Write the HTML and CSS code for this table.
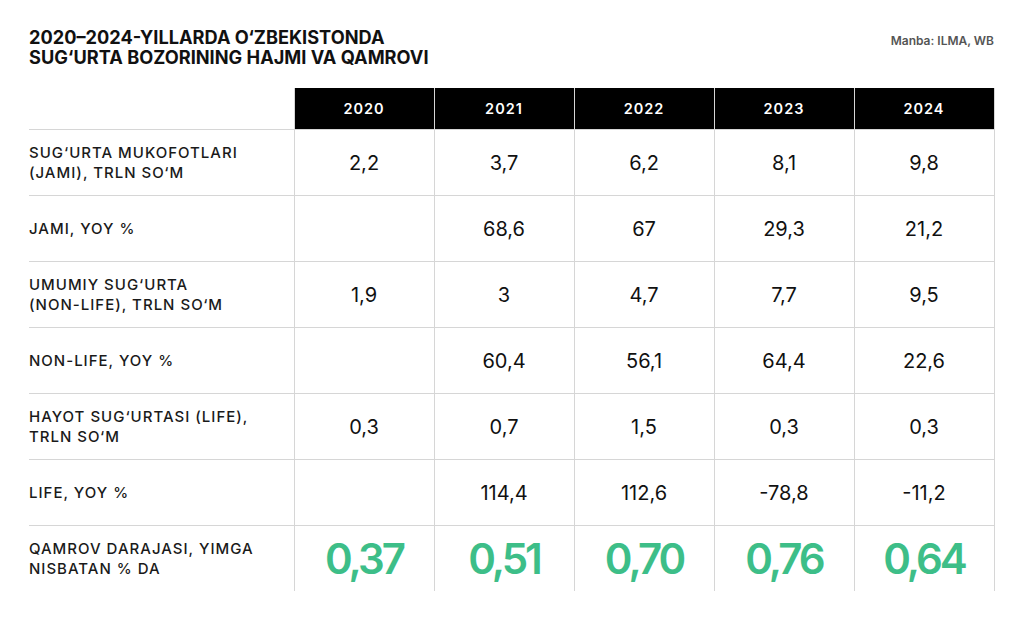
FILE: index.html
```html
<!DOCTYPE html>
<html lang="uz">
<head>
<meta charset="utf-8">
<title>Sug'urta bozori</title>
<link rel="stylesheet" href="styles.css">
</head>
<body>
<div class="page">
  <header class="top">
    <h1 class="title">2020–2024-YILLARDA O‘ZBEKISTONDA<br>SUG‘URTA BOZORINING HAJMI VA QAMROVI</h1>
    <div class="source">Manba: ILMA, WB</div>
  </header>
  <table class="data">
    <colgroup>
      <col class="c-label"><col class="c-year"><col class="c-year"><col class="c-year"><col class="c-year"><col class="c-year">
    </colgroup>
    <thead>
      <tr>
        <th class="blank"></th>
        <th>2020</th><th>2021</th><th>2022</th><th>2023</th><th>2024</th>
      </tr>
    </thead>
    <tbody>
      <tr>
        <td class="label">SUG‘URTA MUKOFOTLARI<br>(JAMI), TRLN SO‘M</td>
        <td>2,2</td><td>3,7</td><td>6,2</td><td>8,1</td><td>9,8</td>
      </tr>
      <tr>
        <td class="label">JAMI, YOY %</td>
        <td></td><td>68,6</td><td>67</td><td>29,3</td><td>21,2</td>
      </tr>
      <tr>
        <td class="label">UMUMIY SUG‘URTA<br>(NON-LIFE), TRLN SO‘M</td>
        <td>1,9</td><td>3</td><td>4,7</td><td>7,7</td><td>9,5</td>
      </tr>
      <tr>
        <td class="label">NON-LIFE, YOY %</td>
        <td></td><td>60,4</td><td>56,1</td><td>64,4</td><td>22,6</td>
      </tr>
      <tr>
        <td class="label">HAYOT SUG‘URTASI (LIFE),<br>TRLN SO‘M</td>
        <td>0,3</td><td>0,7</td><td>1,5</td><td>0,3</td><td>0,3</td>
      </tr>
      <tr>
        <td class="label">LIFE, YOY %</td>
        <td></td><td>114,4</td><td>112,6</td><td>-78,8</td><td>-11,2</td>
      </tr>
      <tr class="green-row">
        <td class="label">QAMROV DARAJASI, YIMGA<br>NISBATAN % DA</td>
        <td>0,37</td><td>0,51</td><td>0,70</td><td>0,76</td><td>0,64</td>
      </tr>
    </tbody>
  </table>
</div>
</body>
</html>
```

FILE: styles.css
```css
html, body {
  margin: 0;
  padding: 0;
  background: #ffffff;
}

body {
  font-family: Inter, "Noto Sans", "Liberation Sans", sans-serif;
  color: #111111;
}

.page {
  width: 1024px;
  height: 620px;
  padding: 27px 30px 0 29px;
  box-sizing: border-box;
}

.top {
  display: flex;
  justify-content: space-between;
  align-items: flex-start;
  height: 61px;
}

.title {
  margin: 0;
  font-size: 18.2px;
  line-height: 20px;
  font-weight: 700;
  letter-spacing: 0;
  color: #111111;
}

.source {
  margin-top: 6px;
  font-size: 12px;
  font-weight: 600;
  color: #555555;
}

.data {
  border-collapse: collapse;
  table-layout: fixed;
  width: 965px;
}

.c-label { width: 265px; }
.c-year { width: 140px; }

.data th {
  height: 41px;
  padding: 0;
  background: #000000;
  color: #ffffff;
  font-size: 14.5px;
  font-weight: 600;
  letter-spacing: 1px;
  text-align: center;
  border-left: 1px solid #d6d6d6;
  border-right: 1px solid #d6d6d6;
}

.data th.blank {
  background: transparent;
  border: none;
}

.data td {
  height: 65px;
  padding: 0;
  text-align: center;
  vertical-align: middle;
  font-size: 20px;
  font-weight: 400;
  color: #111111;
  border-top: 1px solid #d6d6d6;
  border-left: 1px solid #d6d6d6;
  border-right: 1px solid #d6d6d6;
}

.data td.label {
  text-align: left;
  font-size: 15px;
  font-weight: 500;
  line-height: 20px;
  letter-spacing: 1px;
  border-left: none;
  color: #1a1a1a;
}

.green-row td {
  font-size: 42px;
  font-weight: 600;
  letter-spacing: -3px;
  color: #3dbe88;
}

.green-row td.label {
  font-size: 15px;
  font-weight: 500;
  letter-spacing: 1px;
  color: #1a1a1a;
}
```
